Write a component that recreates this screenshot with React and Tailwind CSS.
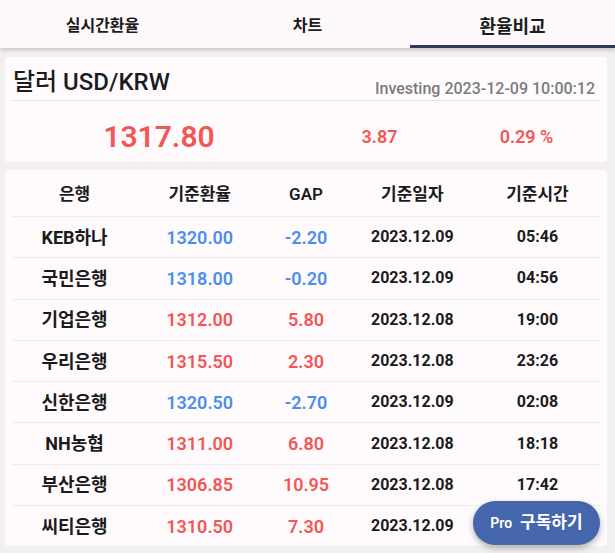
const tabs = ['실시간환율', '차트', '환율비교'];

const RED = 'text-[#f25656]';
const BLUE = 'text-[#4a8ef0]';

const rows = [
  { bank: 'KEB하나', rate: '1320.00', gap: '-2.20', date: '2023.12.09', time: '05:46', up: false },
  { bank: '국민은행', rate: '1318.00', gap: '-0.20', date: '2023.12.09', time: '04:56', up: false },
  { bank: '기업은행', rate: '1312.00', gap: '5.80', date: '2023.12.08', time: '19:00', up: true },
  { bank: '우리은행', rate: '1315.50', gap: '2.30', date: '2023.12.08', time: '23:26', up: true },
  { bank: '신한은행', rate: '1320.50', gap: '-2.70', date: '2023.12.09', time: '02:08', up: false },
  { bank: 'NH농협', rate: '1311.00', gap: '6.80', date: '2023.12.08', time: '18:18', up: true },
  { bank: '부산은행', rate: '1306.85', gap: '10.95', date: '2023.12.08', time: '17:42', up: true },
  { bank: '씨티은행', rate: '1310.50', gap: '7.30', date: '2023.12.09', time: '', up: true },
];

const App = () => {
  return (
    <div
      className="h-[553px] overflow-hidden bg-[#f2eff0] relative"
      style={{ fontFamily: 'Roboto, "Noto Sans CJK KR", sans-serif' }}
    >
      {/* Tabs */}
      <div className="h-[48px] bg-[#fdf9fa] flex shadow-[0_2px_4px_rgba(0,0,0,0.18)] relative z-10">
        {tabs.map((t, i) => (
          <div
            key={t}
            className={
              'flex-1 flex items-center justify-center text-[#1c1b1d] pt-[4px] ' +
              (i === 2
                ? 'text-[18px] font-bold border-b-[3px] border-[#2f3a5c] pt-[7px]'
                : 'text-[16px] font-bold')
            }
          >
            {t}
          </div>
        ))}
      </div>

      {/* Summary card */}
      <div className="mt-[9px] ml-[5px] mr-[8px] bg-[#fffbfc] rounded-[4px] px-[7px]">
        <div className="flex items-end justify-between h-[44px] border-b border-[#e6e2e3] px-[1px] pb-[2px]">
          <span className="text-[24px] font-medium text-[#1b1b1d] leading-none mb-[4px]">달러 USD/KRW</span>
          <span className="text-[16px] font-medium text-[#7b7b7d] leading-none mr-[4px] mb-[1px]">
            Investing 2023-12-09 10:00:12
          </span>
        </div>
        <div className="flex items-center h-[61px] pt-[10px]">
          <div className={'flex-[2] text-center text-[30px] font-semibold ' + RED}>1317.80</div>
          <div className={'flex-1 text-center text-[18px] font-semibold ' + RED}>3.87</div>
          <div className={'flex-1 text-center text-[18px] font-semibold ' + RED}>0.29 %</div>
        </div>
      </div>

      {/* Bank table */}
      <div className="mt-[8px] ml-[5px] mr-[8px] bg-[#fffbfc] rounded-[4px] px-[7px] pt-[4px]">
        <div className="flex items-center h-[42px] text-[17px] font-semibold text-[#1b1b1d]">
          <div className="flex-[1] text-center">은행</div>
          <div className="flex-[1] text-center">기준환율</div>
          <div className="flex-[0.7] text-center">GAP</div>
          <div className="flex-[1] text-center">기준일자</div>
          <div className="flex-[1] text-center">기준시간</div>
        </div>
        {rows.map((r) => (
          <div key={r.bank} className="flex items-center h-[41.3px] border-t border-[#eeeaeb]">
            <div className="flex-[1] text-center text-[18px] font-bold text-[#1b1b1d]">{r.bank}</div>
            <div className={'flex-[1] text-center text-[18px] font-semibold ' + (r.up ? RED : BLUE)}>{r.rate}</div>
            <div className={'flex-[0.7] text-center text-[18px] font-semibold ' + (r.up ? RED : BLUE)}>{r.gap}</div>
            <div className="flex-[1] text-center text-[16px] font-bold text-[#1b1b1d]">{r.date}</div>
            <div className="flex-[1] text-center text-[16px] font-bold text-[#1b1b1d]">{r.time}</div>
          </div>
        ))}
      </div>

      {/* Floating button */}
      <button className="absolute right-[15px] bottom-[8px] w-[127px] h-[44px] rounded-full bg-[#4566ad] text-white flex items-center justify-center gap-[8px] shadow-[0_3px_6px_rgba(0,0,0,0.3)]">
        <span className="text-[14px] font-semibold">Pro</span>
        <span className="text-[17px] font-bold">구독하기</span>
      </button>
    </div>
  );
};

export default App;
